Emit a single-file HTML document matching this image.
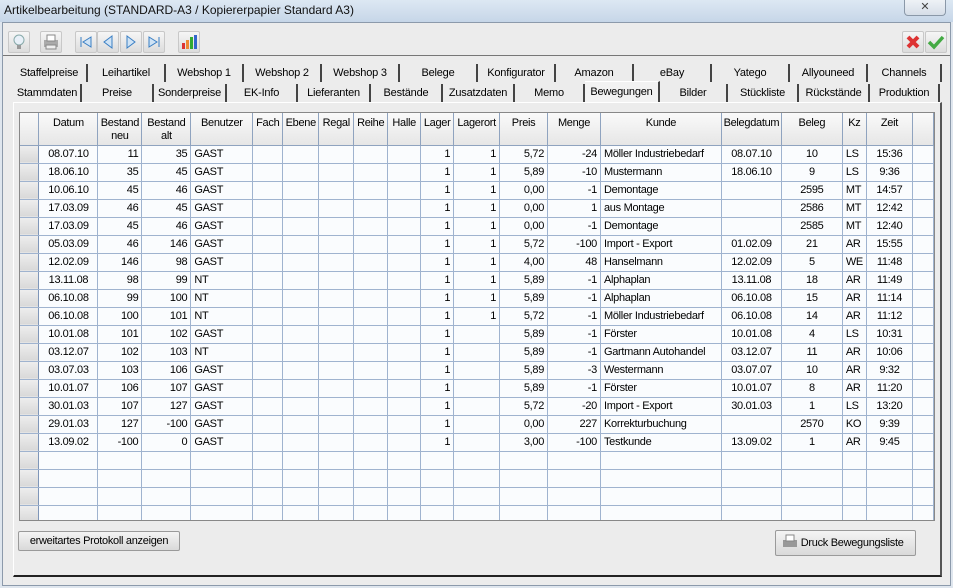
<!DOCTYPE html>
<html><head><meta charset="utf-8"><style>
*{box-sizing:border-box;margin:0;padding:0}
body{width:953px;height:588px;overflow:hidden;background:#dfe6ee;font-family:"Liberation Sans",sans-serif;font-size:11px;color:#000;position:relative}
.abs{position:absolute}
#title{left:0;top:0;width:953px;height:22px;background:linear-gradient(#dde8f3,#c6d6e8);font-size:12px;padding:3px 0 0 4px;color:#111}
#close{left:904px;top:0;width:42px;height:16px;border:1px solid #8a98a8;border-top:none;border-radius:0 0 4px 4px;background:linear-gradient(#eef2f6,#d6dee8);text-align:center;font-size:11px;color:#444;line-height:14px}
#win{left:2px;top:22px;width:949px;height:564px;background:#ececec;border:1px solid #8c9aab}
.tb{top:31px;width:22px;height:22px;border:1px solid #c8c8c8;background:linear-gradient(#f6f6f6,#dcdcdc);border-radius:2px}
#tbline{left:3px;top:55px;width:947px;height:1px;background:#777}
.tab{height:18px;text-align:center;line-height:18px;border-right:2px solid #444;background:#ececec;white-space:nowrap;font-size:11px;letter-spacing:-0.2px}
#panel{left:13px;top:102px;width:929px;height:475px;border:1px solid #fff;border-right:2px solid #555;border-bottom:2px solid #222}
#grid{left:19px;top:112px;width:916px;height:409px;background:#fff;border:1px solid #888;overflow:hidden}
table{border-collapse:collapse;table-layout:fixed}
td,th{border-right:1px solid #9fb3cf;border-bottom:1px solid #9fb3cf;height:18px;padding:0 3px;white-space:nowrap;overflow:hidden;font-weight:normal;font-size:11px;letter-spacing:-0.3px}
th{height:32px;background:linear-gradient(#fafafa,#e6e6e6);border-right:1px solid #8fa3bf;border-bottom:1px solid #8fa3bf;vertical-align:top;line-height:13px;text-align:center;padding:4px 0 0}
td{background:#fafcfe}
td:nth-child(1){background:linear-gradient(#eeeeee,#d8d8d8);border-right:1px solid #7f96b8}
td:nth-child(2){text-align:center}
td:nth-child(3),td:nth-child(4),td:nth-child(11),td:nth-child(12),td:nth-child(13),td:nth-child(14){text-align:right}
td:nth-child(16),td:nth-child(17),td:nth-child(19){text-align:center}
.btn{border:1px solid #9a9a9a;border-radius:2px;background:linear-gradient(#f4f4f4,#d9d9d9);font-size:11px;white-space:nowrap;letter-spacing:-0.3px}
</style></head><body>
<div id="title" class="abs">Artikelbearbeitung (STANDARD-A3 / Kopiererpapier Standard A3)</div>
<div id="close" class="abs">✕</div>
<div id="win" class="abs"></div>
<div class="abs tb" style="left:8px"><svg width="20" height="20"><circle cx="10" cy="8" r="5" fill="#e8f0f8" stroke="#8aa" /><rect x="8" y="13" width="4" height="4" fill="#999"/></svg></div>
<div class="abs tb" style="left:40px"><svg width="20" height="20"><rect x="3" y="8" width="14" height="7" fill="#aaa"/><rect x="6" y="3" width="8" height="6" fill="#fff" stroke="#888"/><rect x="5" y="13" width="10" height="4" fill="#eee" stroke="#888"/></svg></div>
<div class="abs tb" style="left:75px"><svg width="20" height="20"><path d="M5 5v10M15 5l-8 5 8 5z" stroke="#3a7fc4" fill="#cfe3f5"/></svg></div>
<div class="abs tb" style="left:97px"><svg width="20" height="20"><path d="M14 4l-8 6 8 6z" stroke="#3a7fc4" fill="#cfe3f5"/></svg></div>
<div class="abs tb" style="left:120px"><svg width="20" height="20"><path d="M6 4l8 6-8 6z" stroke="#3a7fc4" fill="#cfe3f5"/></svg></div>
<div class="abs tb" style="left:143px"><svg width="20" height="20"><path d="M15 5v10M5 5l8 5-8 5z" stroke="#3a7fc4" fill="#cfe3f5"/></svg></div>
<div class="abs tb" style="left:178px"><svg width="20" height="20"><rect x="3" y="11" width="3" height="6" fill="#d33"/><rect x="7" y="8" width="3" height="9" fill="#e83"/><rect x="11" y="5" width="3" height="12" fill="#3a3"/><rect x="15" y="3" width="3" height="14" fill="#36c"/></svg></div>
<div class="abs tb" style="left:902px"><svg width="20" height="20"><path d="M5 5l10 10M15 5L5 15" stroke="#d33" stroke-width="4"/></svg></div>
<div class="abs tb" style="left:925px"><svg width="20" height="20"><path d="M3 10l5 5 9-10" stroke="#4a4" stroke-width="3.5" fill="none"/></svg></div>
<div id="tbline" class="abs"></div>

<div class="abs tab" style="left:12px;top:64px;width:76px">Staffelpreise</div>
<div class="abs tab" style="left:88px;top:64px;width:78px">Leihartikel</div>
<div class="abs tab" style="left:166px;top:64px;width:78px">Webshop 1</div>
<div class="abs tab" style="left:244px;top:64px;width:78px">Webshop 2</div>
<div class="abs tab" style="left:322px;top:64px;width:78px">Webshop 3</div>
<div class="abs tab" style="left:400px;top:64px;width:78px">Belege</div>
<div class="abs tab" style="left:478px;top:64px;width:78px">Konfigurator</div>
<div class="abs tab" style="left:556px;top:64px;width:78px">Amazon</div>
<div class="abs tab" style="left:634px;top:64px;width:78px">eBay</div>
<div class="abs tab" style="left:712px;top:64px;width:78px">Yatego</div>
<div class="abs tab" style="left:790px;top:64px;width:78px">Allyouneed</div>
<div class="abs tab" style="left:868px;top:64px;width:74px">Channels</div>
<div class="abs tab" style="left:14px;top:84px;width:68px">Stammdaten</div>
<div class="abs tab" style="left:82px;top:84px;width:72px">Preise</div>
<div class="abs tab" style="left:154px;top:84px;width:73px">Sonderpreise</div>
<div class="abs tab" style="left:227px;top:84px;width:71px">EK-Info</div>
<div class="abs tab" style="left:298px;top:84px;width:73px">Lieferanten</div>
<div class="abs tab" style="left:371px;top:84px;width:72px">Bestände</div>
<div class="abs tab" style="left:443px;top:84px;width:72px">Zusatzdaten</div>
<div class="abs tab" style="left:515px;top:84px;width:70px">Memo</div>
<div class="abs tab" style="left:585px;top:81px;width:75px;height:22px;line-height:20px;background:#f2f2f2;border-top:1px solid #fff">Bewegungen</div>
<div class="abs tab" style="left:660px;top:84px;width:68px">Bilder</div>
<div class="abs tab" style="left:728px;top:84px;width:71px">Stückliste</div>
<div class="abs tab" style="left:799px;top:84px;width:71px">Rückstände</div>
<div class="abs tab" style="left:870px;top:84px;width:70px">Produktion</div>

<div id="panel" class="abs"></div>
<div id="grid" class="abs"><table>
<colgroup><col style="width:19px"><col style="width:59px"><col style="width:44px"><col style="width:49px"><col style="width:62px"><col style="width:30px"><col style="width:36px"><col style="width:35px"><col style="width:34px"><col style="width:33px"><col style="width:33px"><col style="width:46px"><col style="width:48px"><col style="width:53px"><col style="width:121px"><col style="width:60px"><col style="width:61px"><col style="width:24px"><col style="width:46px"><col style="width:21px"></colgroup>
<tr><th></th><th>Datum</th><th>Bestand<br>neu</th><th>Bestand<br>alt</th><th>Benutzer</th><th>Fach</th><th>Ebene</th><th>Regal</th><th>Reihe</th><th>Halle</th><th>Lager</th><th>Lagerort</th><th>Preis</th><th>Menge</th><th>Kunde</th><th>Belegdatum</th><th>Beleg</th><th>Kz</th><th>Zeit</th><th></th></tr>
<tr><td></td><td>08.07.10</td><td>11</td><td>35</td><td>GAST</td><td></td><td></td><td></td><td></td><td></td><td>1</td><td>1</td><td>5,72</td><td>-24</td><td>Möller Industriebedarf</td><td>08.07.10</td><td>10</td><td>LS</td><td>15:36</td><td></td></tr>
<tr><td></td><td>18.06.10</td><td>35</td><td>45</td><td>GAST</td><td></td><td></td><td></td><td></td><td></td><td>1</td><td>1</td><td>5,89</td><td>-10</td><td>Mustermann</td><td>18.06.10</td><td>9</td><td>LS</td><td>9:36</td><td></td></tr>
<tr><td></td><td>10.06.10</td><td>45</td><td>46</td><td>GAST</td><td></td><td></td><td></td><td></td><td></td><td>1</td><td>1</td><td>0,00</td><td>-1</td><td>Demontage</td><td></td><td>2595</td><td>MT</td><td>14:57</td><td></td></tr>
<tr><td></td><td>17.03.09</td><td>46</td><td>45</td><td>GAST</td><td></td><td></td><td></td><td></td><td></td><td>1</td><td>1</td><td>0,00</td><td>1</td><td>aus Montage</td><td></td><td>2586</td><td>MT</td><td>12:42</td><td></td></tr>
<tr><td></td><td>17.03.09</td><td>45</td><td>46</td><td>GAST</td><td></td><td></td><td></td><td></td><td></td><td>1</td><td>1</td><td>0,00</td><td>-1</td><td>Demontage</td><td></td><td>2585</td><td>MT</td><td>12:40</td><td></td></tr>
<tr><td></td><td>05.03.09</td><td>46</td><td>146</td><td>GAST</td><td></td><td></td><td></td><td></td><td></td><td>1</td><td>1</td><td>5,72</td><td>-100</td><td>Import - Export</td><td>01.02.09</td><td>21</td><td>AR</td><td>15:55</td><td></td></tr>
<tr><td></td><td>12.02.09</td><td>146</td><td>98</td><td>GAST</td><td></td><td></td><td></td><td></td><td></td><td>1</td><td>1</td><td>4,00</td><td>48</td><td>Hanselmann</td><td>12.02.09</td><td>5</td><td>WE</td><td>11:48</td><td></td></tr>
<tr><td></td><td>13.11.08</td><td>98</td><td>99</td><td>NT</td><td></td><td></td><td></td><td></td><td></td><td>1</td><td>1</td><td>5,89</td><td>-1</td><td>Alphaplan</td><td>13.11.08</td><td>18</td><td>AR</td><td>11:49</td><td></td></tr>
<tr><td></td><td>06.10.08</td><td>99</td><td>100</td><td>NT</td><td></td><td></td><td></td><td></td><td></td><td>1</td><td>1</td><td>5,89</td><td>-1</td><td>Alphaplan</td><td>06.10.08</td><td>15</td><td>AR</td><td>11:14</td><td></td></tr>
<tr><td></td><td>06.10.08</td><td>100</td><td>101</td><td>NT</td><td></td><td></td><td></td><td></td><td></td><td>1</td><td>1</td><td>5,72</td><td>-1</td><td>Möller Industriebedarf</td><td>06.10.08</td><td>14</td><td>AR</td><td>11:12</td><td></td></tr>
<tr><td></td><td>10.01.08</td><td>101</td><td>102</td><td>GAST</td><td></td><td></td><td></td><td></td><td></td><td>1</td><td></td><td>5,89</td><td>-1</td><td>Förster</td><td>10.01.08</td><td>4</td><td>LS</td><td>10:31</td><td></td></tr>
<tr><td></td><td>03.12.07</td><td>102</td><td>103</td><td>NT</td><td></td><td></td><td></td><td></td><td></td><td>1</td><td></td><td>5,89</td><td>-1</td><td>Gartmann Autohandel</td><td>03.12.07</td><td>11</td><td>AR</td><td>10:06</td><td></td></tr>
<tr><td></td><td>03.07.03</td><td>103</td><td>106</td><td>GAST</td><td></td><td></td><td></td><td></td><td></td><td>1</td><td></td><td>5,89</td><td>-3</td><td>Westermann</td><td>03.07.07</td><td>10</td><td>AR</td><td>9:32</td><td></td></tr>
<tr><td></td><td>10.01.07</td><td>106</td><td>107</td><td>GAST</td><td></td><td></td><td></td><td></td><td></td><td>1</td><td></td><td>5,89</td><td>-1</td><td>Förster</td><td>10.01.07</td><td>8</td><td>AR</td><td>11:20</td><td></td></tr>
<tr><td></td><td>30.01.03</td><td>107</td><td>127</td><td>GAST</td><td></td><td></td><td></td><td></td><td></td><td>1</td><td></td><td>5,72</td><td>-20</td><td>Import - Export</td><td>30.01.03</td><td>1</td><td>LS</td><td>13:20</td><td></td></tr>
<tr><td></td><td>29.01.03</td><td>127</td><td>-100</td><td>GAST</td><td></td><td></td><td></td><td></td><td></td><td>1</td><td></td><td>0,00</td><td>227</td><td>Korrekturbuchung</td><td></td><td>2570</td><td>KO</td><td>9:39</td><td></td></tr>
<tr><td></td><td>13.09.02</td><td>-100</td><td>0</td><td>GAST</td><td></td><td></td><td></td><td></td><td></td><td>1</td><td></td><td>3,00</td><td>-100</td><td>Testkunde</td><td>13.09.02</td><td>1</td><td>AR</td><td>9:45</td><td></td></tr>
<tr><td></td><td></td><td></td><td></td><td></td><td></td><td></td><td></td><td></td><td></td><td></td><td></td><td></td><td></td><td></td><td></td><td></td><td></td><td></td><td></td></tr>
<tr><td></td><td></td><td></td><td></td><td></td><td></td><td></td><td></td><td></td><td></td><td></td><td></td><td></td><td></td><td></td><td></td><td></td><td></td><td></td><td></td></tr>
<tr><td></td><td></td><td></td><td></td><td></td><td></td><td></td><td></td><td></td><td></td><td></td><td></td><td></td><td></td><td></td><td></td><td></td><td></td><td></td><td></td></tr>
<tr><td></td><td></td><td></td><td></td><td></td><td></td><td></td><td></td><td></td><td></td><td></td><td></td><td></td><td></td><td></td><td></td><td></td><td></td><td></td><td></td></tr>
</table></div>
<div class="abs btn" style="left:18px;top:531px;width:162px;height:20px;line-height:18px;text-align:center">erweitartes Protokoll anzeigen</div>
<div class="abs btn" style="left:775px;top:530px;width:141px;height:26px;line-height:24px;padding-left:6px"><svg width="16" height="16" style="vertical-align:-3px"><rect x="1" y="7" width="14" height="7" fill="#999"/><rect x="4" y="2" width="8" height="6" fill="#fff" stroke="#888"/></svg> Druck Bewegungsliste</div>
</body></html>
